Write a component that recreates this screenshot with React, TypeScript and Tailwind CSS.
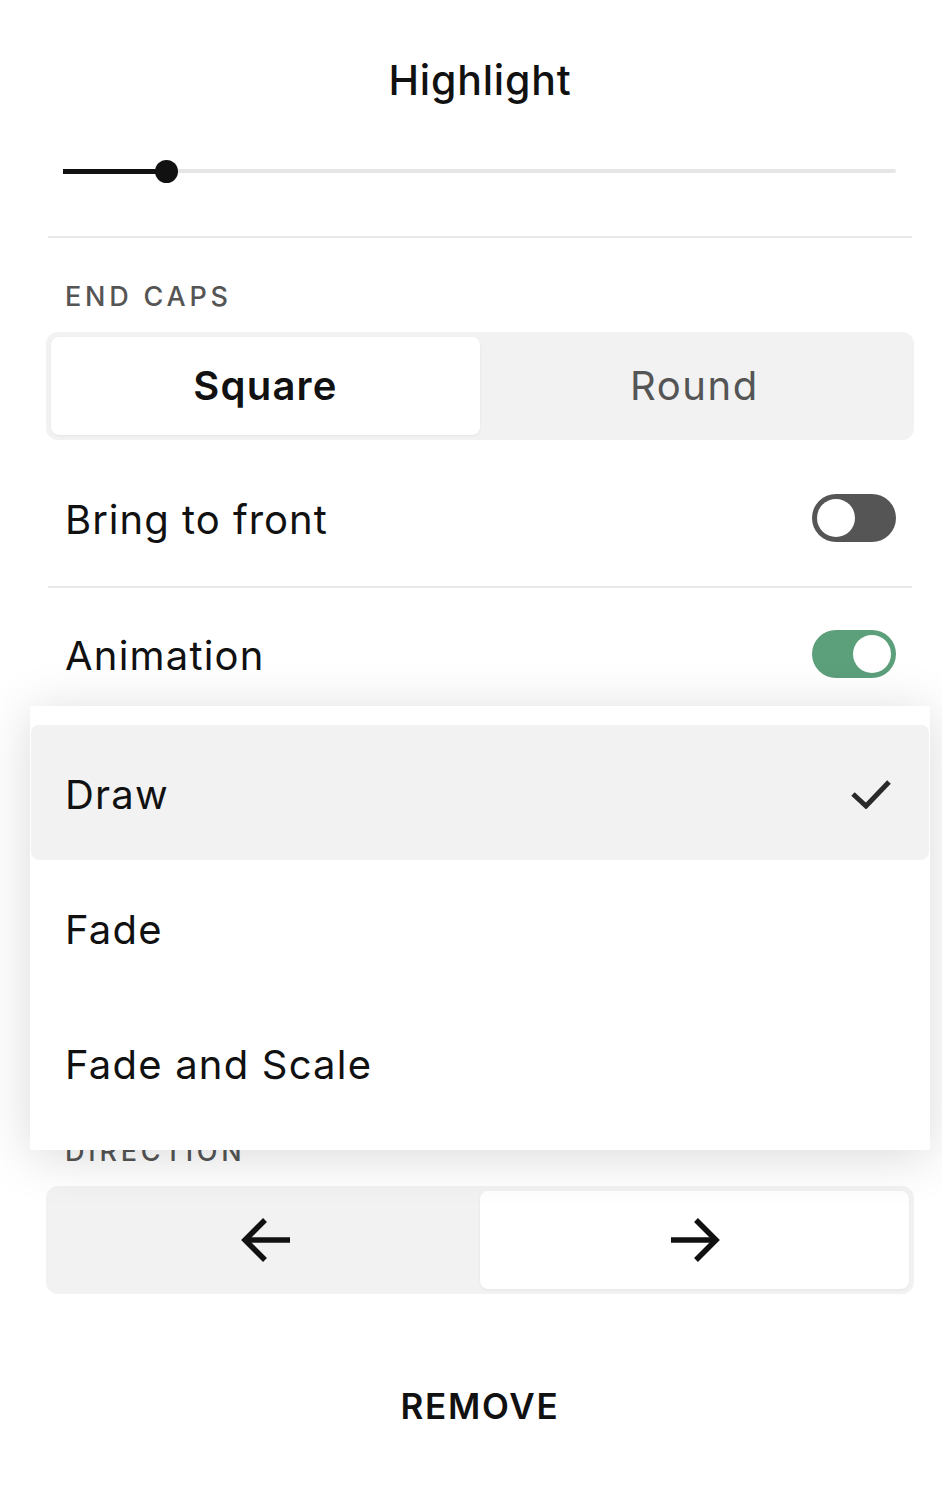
import React from "react";

const font = { fontFamily: 'Inter, "Liberation Sans", Arial, sans-serif' };

function Toggle({ on }: { on: boolean }) {
  return (
    <div
      className={`w-[84px] h-[48px] rounded-full p-[5px] flex ${
        on ? "bg-[#5c9f7b] justify-end" : "bg-[#555555] justify-start"
      }`}
    >
      <span className="w-[38px] h-[38px] rounded-full bg-white" />
    </div>
  );
}

function Arrow({ dir }: { dir: "left" | "right" }) {
  return (
    <svg
      width="50"
      height="44"
      viewBox="0 0 50 44"
      fill="none"
      stroke="#111"
      strokeWidth={5.5}
      className={dir === "right" ? "-scale-x-100" : ""}
    >
      <path d="M4 22 H49" />
      <path d="M24 2 L4 22 L24 42" />
    </svg>
  );
}

export default function App() {
  return (
    <div className="w-[942px] min-h-[1500px] overflow-hidden bg-white text-[#111]" style={font}>
      <div className="relative w-[960px] px-[46px] pb-[80px]">
        {/* Title */}
        <h1 className="pt-[56px] text-center text-[41px] leading-[48px] font-medium tracking-[0.02em]">Highlight</h1>

        {/* Stroke width slider */}
        <div className="mt-[55px] h-[24px] ml-[17px] mr-[18px] relative flex items-center">
          <div className="absolute inset-x-0 h-[4px] bg-[#e6e6e6] rounded-full" />
          <div className="relative h-[5px] w-[103px] bg-[#111]" />
          <div className="relative -ml-[11px] w-[23px] h-[23px] rounded-full bg-[#111]" />
        </div>

        <div className="mt-[53px] mx-[2px] h-[2px] bg-[#e8e8e8]" />

        {/* End caps */}
        <p className="mt-[43px] pl-[19px] text-[27px] leading-[32px] font-medium tracking-[0.14em] text-[#555] uppercase">End Caps</p>
        <div className="mt-[19px] h-[108px] p-[5px] grid grid-cols-2 rounded-[12px] bg-[#f2f2f2]">
          <button className="rounded-[8px] bg-white shadow-[0_1px_3px_rgba(0,0,0,0.06)] text-[40px] font-semibold tracking-[0.03em] text-[#111]">
            Square
          </button>
          <button className="text-[40px] tracking-[0.04em] text-[#555]">Round</button>
        </div>

        {/* Bring to front */}
        <div className="mt-[54px] h-[48px] pl-[19px] pr-[18px] flex items-center justify-between">
          <span className="pt-[4px] text-[40px] leading-[48px] tracking-[0.025em]">Bring to front</span>
          <Toggle on={false} />
        </div>

        <div className="mt-[44px] mx-[2px] h-[2px] bg-[#e8e8e8]" />

        {/* Animation */}
        <div className="mt-[42px] h-[48px] pl-[19px] pr-[18px] flex items-center justify-between">
          <span className="pt-[4px] text-[40px] leading-[48px] tracking-[0.03em]">Animation</span>
          <Toggle on={true} />
        </div>

        {/* Animation settings, covered by the open menu */}
        <div className="mt-[40px] h-[108px] rounded-[12px] bg-[#f2f2f2]" />
        <div className="mt-[92px] h-[24px] mx-[17px] bg-[#e6e6e6]" />
        <div className="mt-[92px] h-[24px] mx-[17px] bg-[#e6e6e6]" />
        <div className="mt-[40px] mx-[2px] h-[2px] bg-[#e8e8e8]" />

        {/* Direction */}
        <p className="mt-[36px] pl-[19px] text-[27px] leading-[32px] font-medium tracking-[0.14em] text-[#555] uppercase">Direction</p>
        <div className="mt-[18px] h-[108px] p-[5px] grid grid-cols-2 rounded-[12px] bg-[#f2f2f2]">
          <button className="flex items-center justify-center">
            <Arrow dir="left" />
          </button>
          <button className="rounded-[8px] bg-white shadow-[0_1px_3px_rgba(0,0,0,0.06)] flex items-center justify-center">
            <Arrow dir="right" />
          </button>
        </div>

        <div className="mt-[92px] text-center text-[35px] leading-[40px] font-semibold tracking-[0.05em]">REMOVE</div>

        {/* Open animation menu */}
        <div className="absolute top-[706px] left-[30px] w-[900px] h-[444px] bg-white shadow-[0_6px_48px_rgba(0,0,0,0.15)] pt-[19px] px-[1px]">
          {[
            { label: "Draw", selected: true },
            { label: "Fade", selected: false },
            { label: "Fade and Scale", selected: false },
          ].map((item) => (
            <div
              key={item.label}
              className={`h-[135px] pl-[34px] pr-[38px] flex items-center justify-between rounded-[8px] ${
                item.selected ? "bg-[#f2f2f2]" : ""
              }`}
            >
              <span className="pt-[4px] text-[40px] leading-[48px] tracking-[0.03em]">{item.label}</span>
              {item.selected && (
                <svg width="40" height="32" viewBox="0 0 40 32" fill="none" stroke="#2a2a2a" strokeWidth={5}>
                  <path d="M2 17 L15 29 L38 5" />
                </svg>
              )}
            </div>
          ))}
        </div>
      </div>
    </div>
  );
}
